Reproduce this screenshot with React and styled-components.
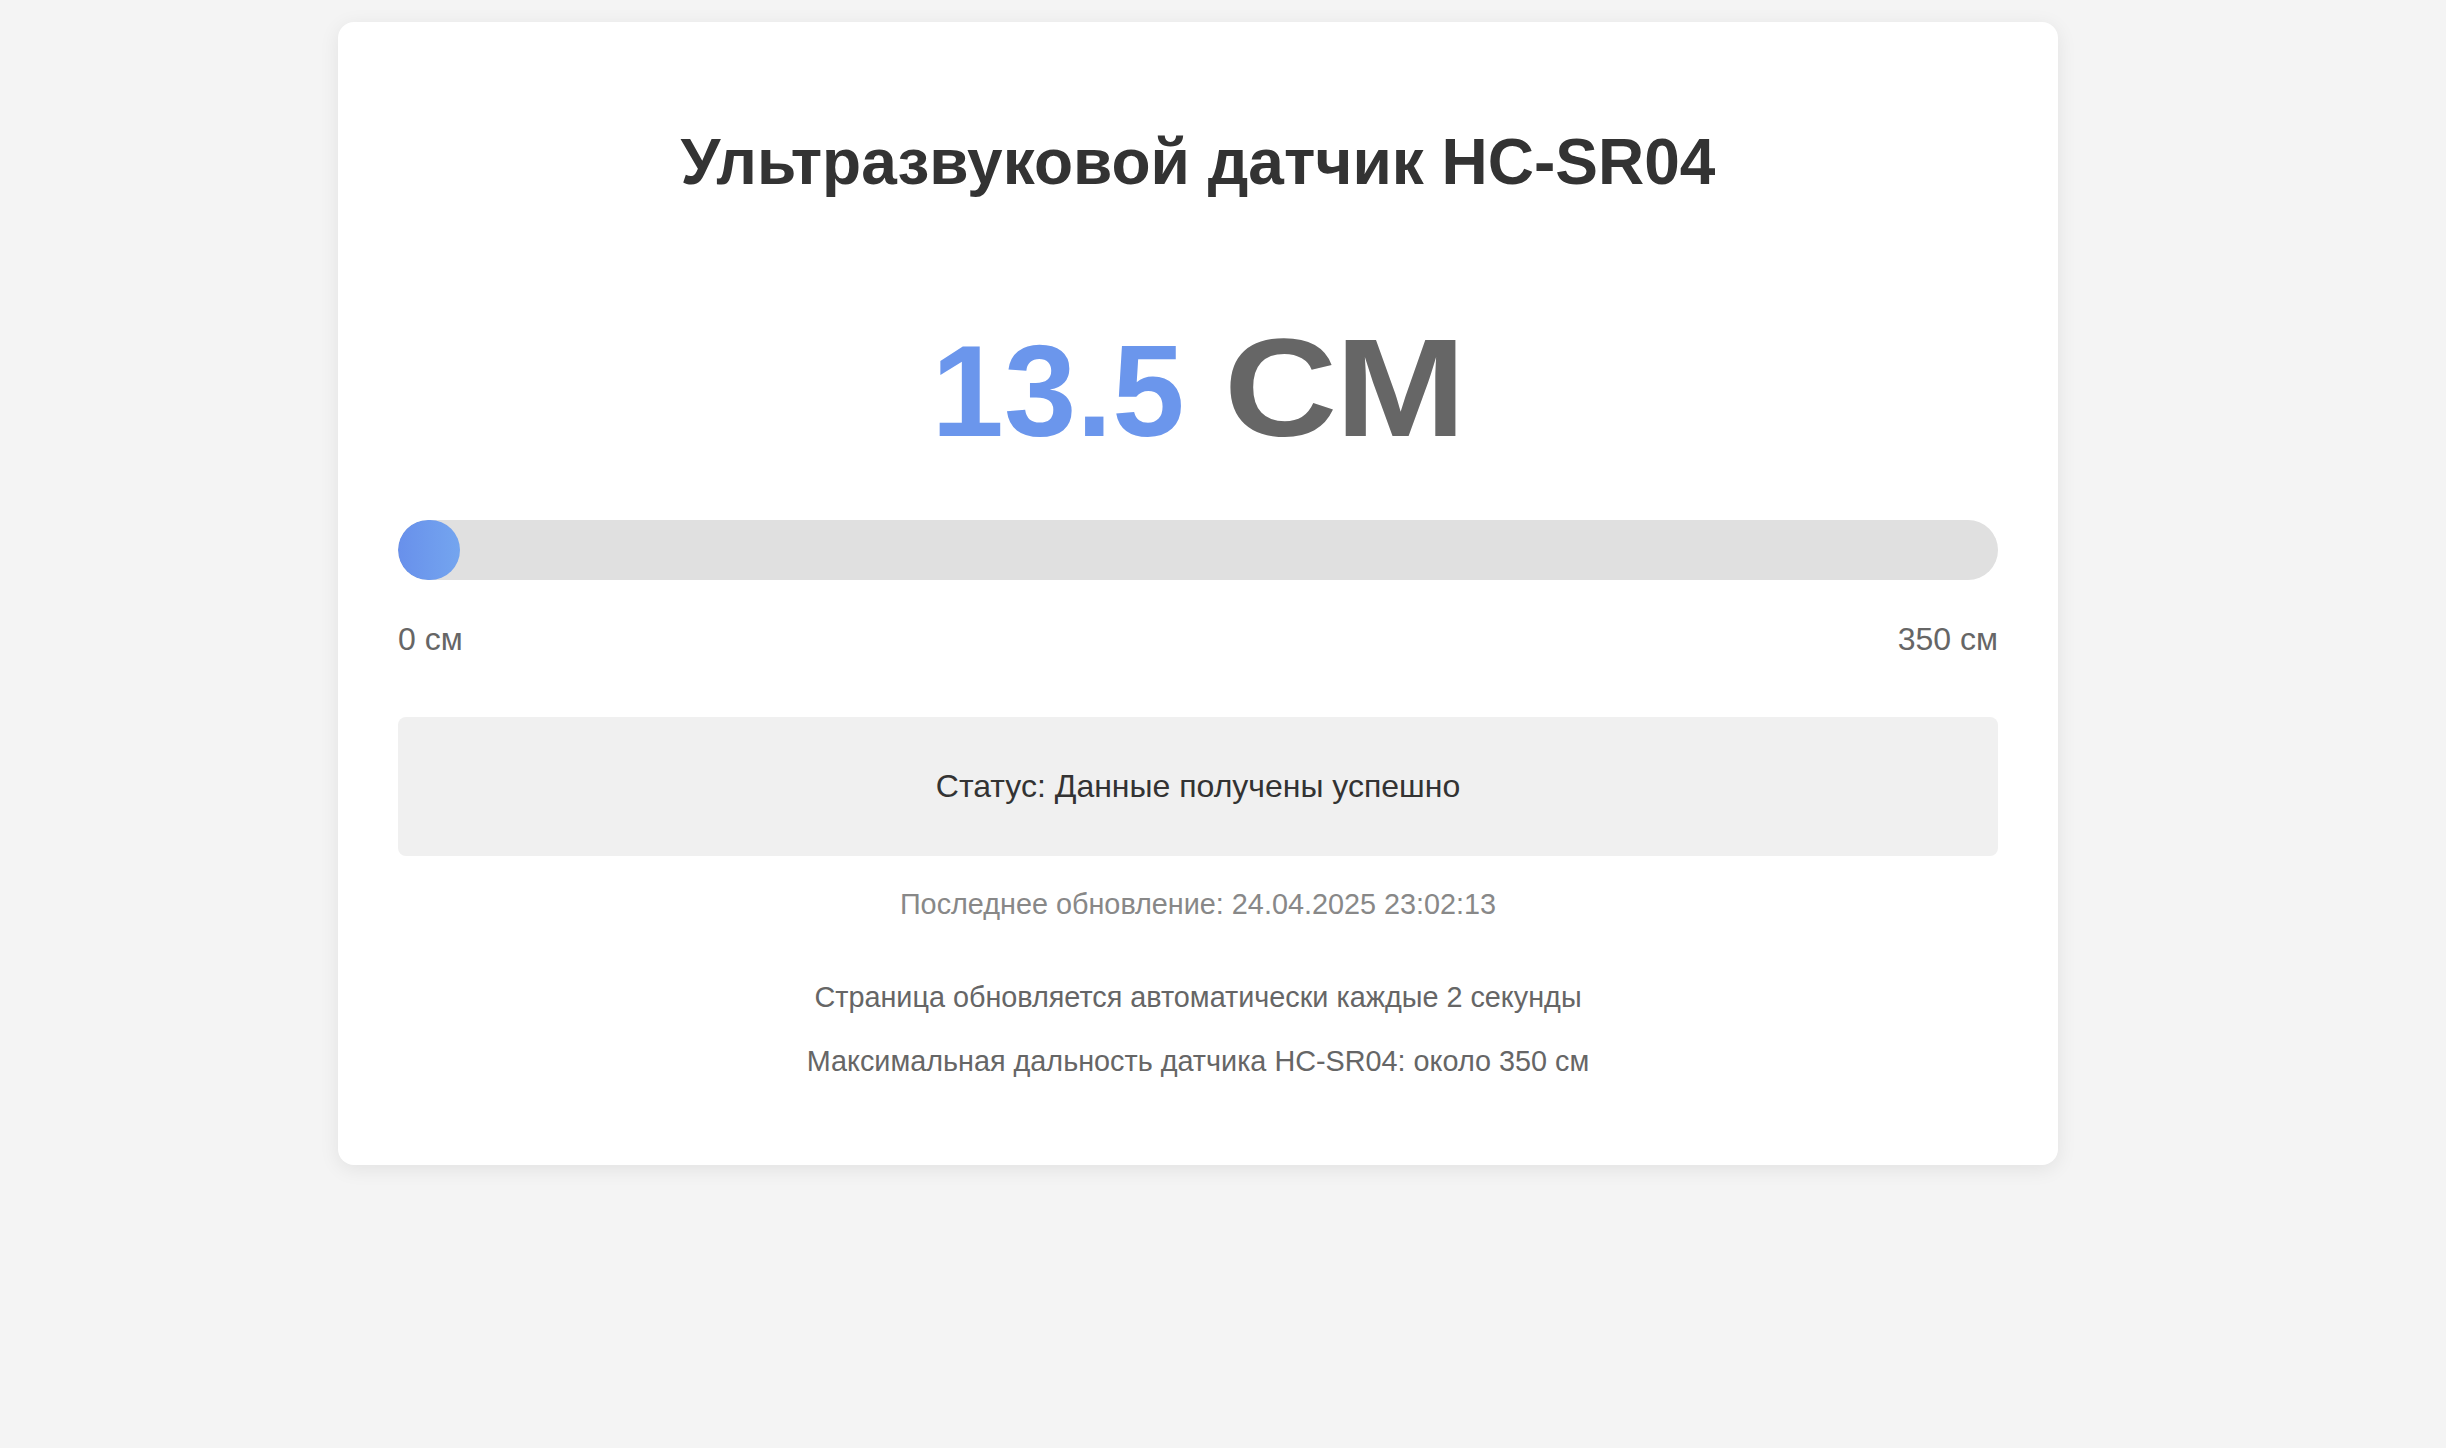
import React from "react";
import styled, { createGlobalStyle } from "styled-components";

const GlobalStyle = createGlobalStyle`
  html, body {
    margin: 0;
    padding: 0;
    background: #f4f4f4;
  }
  body {
    font-family: "Liberation Sans", Arial, Helvetica, sans-serif;
  }
  *, *::before, *::after {
    box-sizing: border-box;
  }
`;

const Page = styled.div`
  display: flex;
  justify-content: center;
  align-items: flex-start;
  padding: 22px 50px 0 0;
  min-height: 1448px;
`;

const Card = styled.main`
  width: 1720px;
  background: #ffffff;
  border-radius: 16px;
  box-shadow: 0 4px 20px rgba(0, 0, 0, 0.08);
  padding: 60px;
  display: flex;
  flex-direction: column;
  text-align: center;
`;

const Title = styled.h1`
  margin: 43px 0 0;
  font-size: 64px;
  line-height: 74px;
  font-weight: 700;
  color: #333333;
`;

const Reading = styled.div`
  margin-top: 108px;
  height: 161px;
  font-size: 140px;
  line-height: 161px;
  font-weight: 700;
  color: #666666;
  white-space: nowrap;
`;

const Value = styled.span`
  font-size: 130px;
  line-height: 130px;
  color: #6b96ec;
`;

const Unit = styled.span`
  display: inline-block;
  transform: scaleX(1.12);
  transform-origin: left center;
  margin-right: 25px;
`;

const Track = styled.div`
  margin-top: 52px;
  height: 60px;
  background: #e0e0e0;
  border-radius: 30px;
  overflow: hidden;
`;

const Fill = styled.div`
  height: 100%;
  border-radius: 30px;
  background: linear-gradient(90deg, #6890eb, #74a5ef);
`;

const Scale = styled.div`
  margin-top: 41px;
  display: flex;
  justify-content: space-between;
  font-size: 32px;
  line-height: 37px;
  color: #666666;
`;

const Status = styled.div`
  margin-top: 59px;
  background: #f0f0f0;
  border-radius: 8px;
  padding: 51px 20px;
  font-size: 32px;
  line-height: 37px;
  color: #333333;
`;

const Updated = styled.div`
  margin-top: 32px;
  font-size: 28.8px;
  line-height: 33px;
  color: #888888;
`;

const Notes = styled.div`
  margin: 60px 0 27px;
  display: flex;
  flex-direction: column;
  gap: 31px;
`;

const Note = styled.p`
  margin: 0;
  font-size: 28.8px;
  line-height: 33px;
  color: #666666;
`;

const distance = 13.5;
const maxRange = 350;

export default function App() {
  const pct = Math.min(100, (distance / maxRange) * 100);
  return (
    <>
      <GlobalStyle />
      <Page>
        <Card>
          <Title>Ультразвуковой датчик HC-SR04</Title>
          <Reading>
            <Value>{distance.toFixed(1)}</Value> <Unit>СМ</Unit>
          </Reading>
          <Track>
            <Fill style={{ width: `${pct}%` }} />
          </Track>
          <Scale>
            <span>0 см</span>
            <span>{maxRange} см</span>
          </Scale>
          <Status>Статус: Данные получены успешно</Status>
          <Updated>Последнее обновление: 24.04.2025 23:02:13</Updated>
          <Notes>
            <Note>Страница обновляется автоматически каждые 2 секунды</Note>
            <Note>Максимальная дальность датчика HC-SR04: около 350 см</Note>
          </Notes>
        </Card>
      </Page>
    </>
  );
}
